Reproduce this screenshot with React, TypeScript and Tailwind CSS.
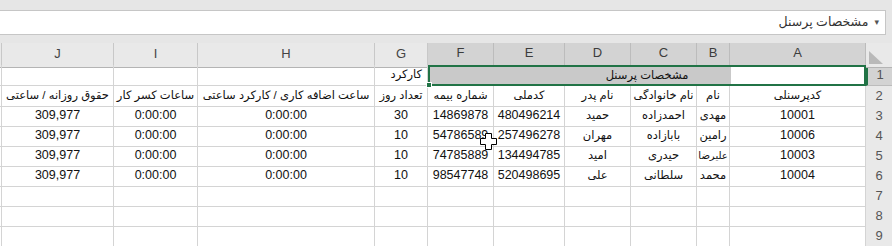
import React from "react";

const FONT = { fontFamily: '"Liberation Sans", "DejaVu Sans", sans-serif' };

type Row = { a: string; b: string; c: string; d: string; e: string; f: string; g: string; small?: boolean };

const rows: Row[] = [
  { a: "10001", b: "مهدی", c: "احمدزاده", d: "حمید", e: "480496214", f: "14869878", g: "30" },
  { a: "10006", b: "رامین", c: "بابازاده", d: "مهران", e: "257496278", f: "54786589", g: "10" },
  { a: "10003", b: "علیرضا", c: "حیدری", d: "امید", e: "134494785", f: "74785889", g: "10", small: true },
  { a: "10004", b: "محمد", c: "سلطانی", d: "علی", e: "520498695", f: "98547748", g: "10" },
];

const GRID =
  "grid grid-cols-[2px_112px_84px_177px_53px_66px_71px_66px_66px_33px_136px_26px]";

function Cell({
  children,
  className = "",
  ar = false,
}: {
  children?: React.ReactNode;
  className?: string;
  ar?: boolean;
}) {
  return (
    <div
      dir={ar ? "rtl" : "ltr"}
      className={
        "flex items-center justify-center overflow-hidden whitespace-nowrap border-r border-b border-[#d4d4d4] text-[#111] " +
        (ar ? "text-[11.5px] " : "text-[12.5px] ") +
        className
      }
    >
      {children}
    </div>
  );
}

function ColHead({ label, sel }: { label: string; sel?: boolean }) {
  return (
    <div
      className={
        "flex items-end justify-center pb-[3px] border-r text-[13px] " +
        (sel
          ? "bg-[#d3d3d3] border-[#bcbcbc] border-b-2 border-b-[#217346] text-[#3c3c3c]"
          : "bg-[#e9e9e9] border-[#c8c8c8] border-b border-b-[#b4b4b4] text-[#444]")
      }
    >
      {label}
    </div>
  );
}

function RowHead({ n, sel }: { n: number; sel?: boolean }) {
  return (
    <div
      className={
        "flex items-center justify-center border-b text-[13px] text-[#555] " +
        (sel
          ? "bg-[#d3d3d3] border-[#bcbcbc] border-l-2 border-l-[#217346]"
          : "bg-[#e9e9e9] border-[#c6c6c6]")
      }
    >
      {n}
    </div>
  );
}

export default function App() {
  return (
    <div className="w-[892px] h-[246px] overflow-hidden bg-[#e6e6e6] relative" style={FONT}>
      {/* top bar */}
      <div className="h-[10px]" />
      <div className="h-[25px] w-[886px] bg-white border border-[#c6c6c6] border-l-0 flex items-center justify-end pr-[6px] gap-[6px]">
        <span dir="rtl" className="text-[12.5px] text-[#333]">
          مشخصات پرسنل
        </span>
        <span className="text-[9px] text-[#555]">▾</span>
      </div>
      <div className="h-[8px]" />

      {/* column headers */}
      <div className={GRID + " h-[22px]"}>
        <div className="bg-[#e9e9e9] border-r border-[#c8c8c8] border-b border-b-[#b4b4b4]" />
        <ColHead label="J" />
        <ColHead label="I" />
        <ColHead label="H" />
        <ColHead label="G" />
        <ColHead label="F" sel />
        <ColHead label="E" sel />
        <ColHead label="D" sel />
        <ColHead label="C" sel />
        <ColHead label="B" sel />
        <ColHead label="A" sel />
        <div className="bg-[#e9e9e9] border-b border-[#b4b4b4] relative">
          <svg className="absolute left-[3px] bottom-[3px]" width="14" height="13" viewBox="0 0 14 13">
            <polygon points="0,0 0,13 14,13" fill="#b9b9b9" />
          </svg>
        </div>
      </div>

      {/* row 1 */}
      <div className={GRID + " h-[21px] bg-white"}>
        <Cell />
        <Cell />
        <Cell />
        <Cell />
        <Cell ar className="justify-start pr-[5px]">
          کارکرد
        </Cell>
        <div className="col-span-6 relative border-2 border-[#217346] flex">
          <div className="w-[301px] bg-[#c9c9c9]" />
          <div className="flex-1 bg-white" />
          <div className="absolute inset-0 flex items-center justify-center">
            <span dir="rtl" className="text-[11.5px] text-[#111]">
              مشخصات پرسنل
            </span>
          </div>
          <div className="absolute -left-[4px] -bottom-[4px] w-[6px] h-[6px] bg-[#217346] border border-white" />
        </div>
        <RowHead n={1} sel />
      </div>

      {/* row 2 */}
      <div className={GRID + " h-[20px] bg-white"}>
        <Cell />
        <Cell ar>حقوق روزانه / ساعتی</Cell>
        <Cell ar>ساعات کسر کار</Cell>
        <Cell ar>ساعت اضافه کاری / کارکرد ساعتی</Cell>
        <Cell ar>تعداد روز</Cell>
        <Cell ar>شماره بیمه</Cell>
        <Cell ar>کدملی</Cell>
        <Cell ar>نام پدر</Cell>
        <Cell ar>نام خانوادگی</Cell>
        <Cell ar>نام</Cell>
        <Cell ar>کدپرسنلی</Cell>
        <RowHead n={2} />
      </div>

      {rows.map((r, i) => (
        <div key={r.a} className={GRID + " h-[20px] bg-white"}>
          <Cell />
          <Cell>309,977</Cell>
          <Cell>0:00:00</Cell>
          <Cell>0:00:00</Cell>
          <Cell>{r.g}</Cell>
          <Cell>{r.f}</Cell>
          <Cell>{r.e}</Cell>
          <Cell ar>{r.d}</Cell>
          <Cell ar>{r.c}</Cell>
          <Cell ar className={r.small ? "!text-[10px] tracking-[-0.3px]" : ""}>
            {r.b}
          </Cell>
          <Cell>{r.a}</Cell>
          <RowHead n={i + 3} />
        </div>
      ))}

      {[7, 8, 9].map((n) => (
        <div key={n} className={GRID + " h-[20px] bg-white"}>
          {Array.from({ length: 11 }).map((_, k) => (
            <Cell key={k} />
          ))}
          <RowHead n={n} />
        </div>
      ))}

      {/* mouse cursor */}
      <svg
        className="absolute left-[480px] top-[133px]"
        width="17"
        height="17"
        viewBox="0 0 17 17"
      >
        <polygon
          points="5.5,0.5 11.5,0.5 11.5,5.5 16.5,5.5 16.5,11.5 11.5,11.5 11.5,16.5 5.5,16.5 5.5,11.5 0.5,11.5 0.5,5.5 5.5,5.5"
          fill="#fff"
          stroke="#000"
          strokeWidth="1"
        />
      </svg>
    </div>
  );
}
